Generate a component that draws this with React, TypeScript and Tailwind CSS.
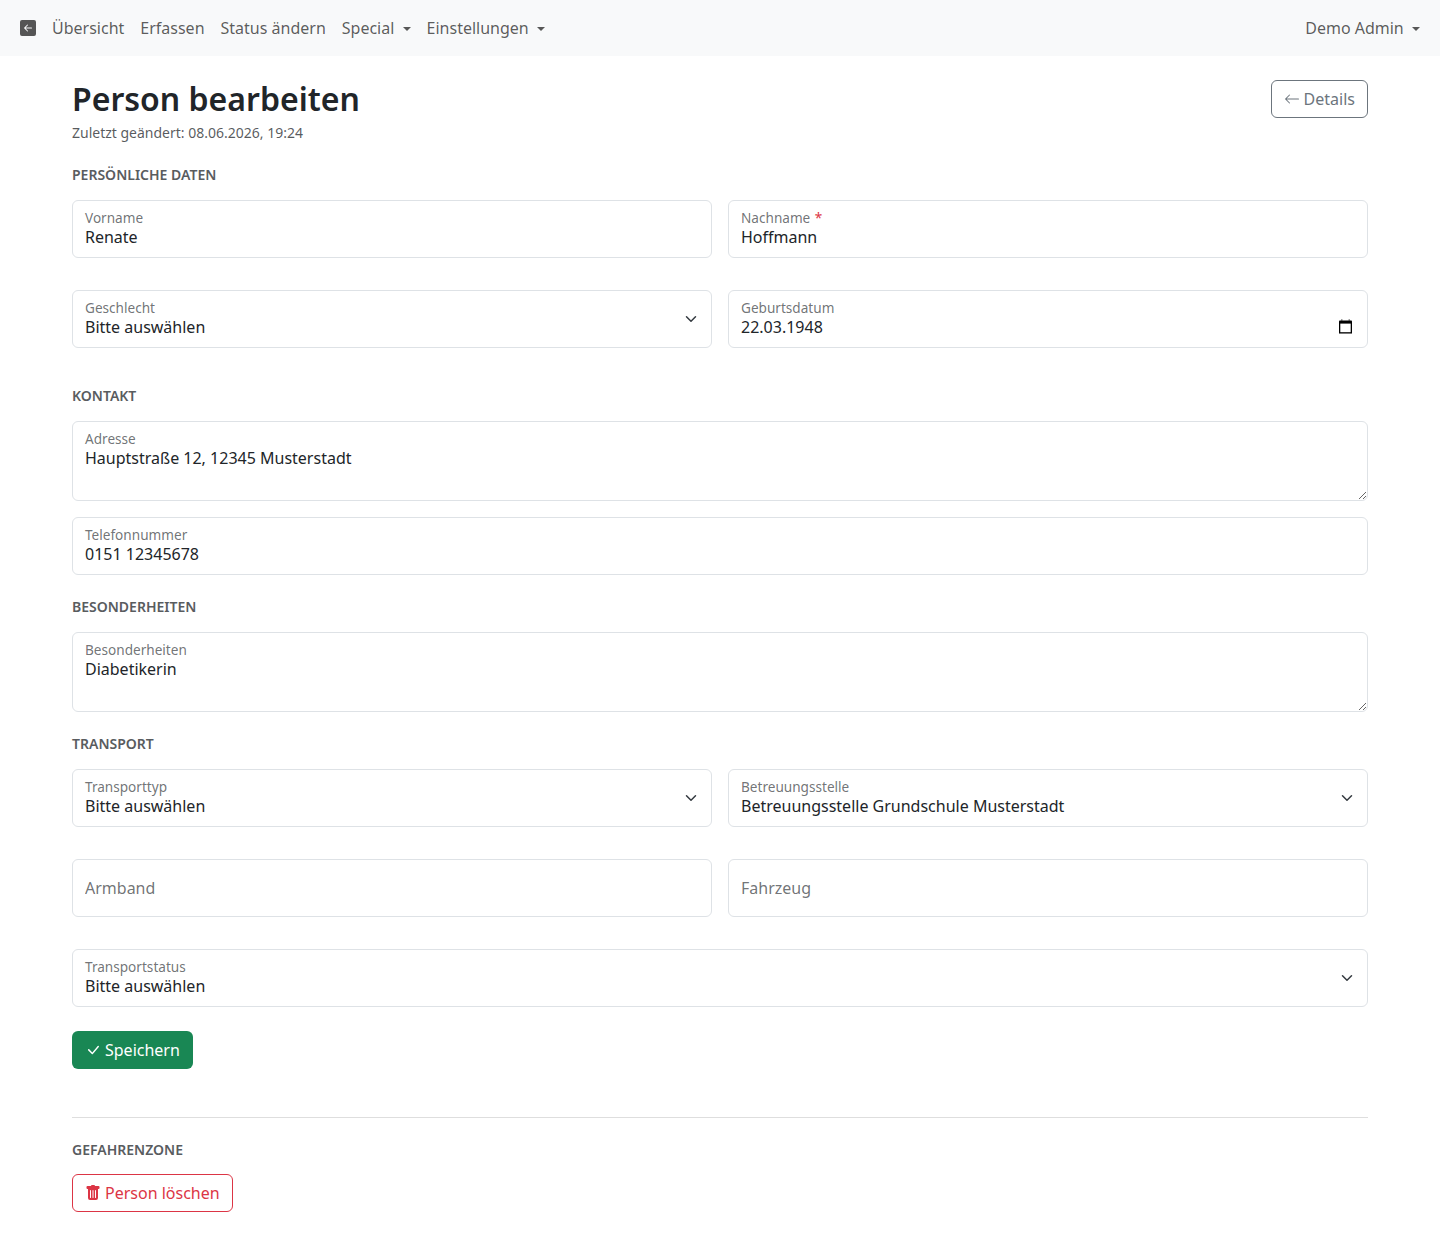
import React from "react";

const font = "font-['Noto_Sans',sans-serif]";

function Caret() {
  return <span className="ml-[8.24px] inline-block align-[3px] w-0 h-0 border-t-[4.8px] border-t-current border-x-[4.8px] border-x-transparent" />;
}

function NavLink({ children, caret }: { children: React.ReactNode; caret?: boolean }) {
  return (
    <a className="block px-2 py-2 text-[rgba(0,0,0,0.65)] cursor-pointer">
      {children}
      {caret && <Caret />}
    </a>
  );
}

function Chevron() {
  return (
    <svg viewBox="0 0 16 16" className="absolute right-[13px] top-[23px] w-4 h-3 pointer-events-none" fill="none" stroke="#343a40" strokeWidth="2" strokeLinecap="round" strokeLinejoin="round">
      <path d="m2 5 6 6 6-6" />
    </svg>
  );
}

function Label({ children }: { children: React.ReactNode }) {
  return <label className="absolute left-[13px] top-[9px] text-[13.6px] leading-[17px] text-[rgba(33,37,41,0.65)] pointer-events-none">{children}</label>;
}

const inputCls = "block w-full h-[58px] border border-[#dee2e6] rounded-md bg-white px-3 pt-[24px] pb-[8px] text-base leading-6 text-[#212529] outline-none";

function TextField({ label, value, required, icon }: { label: string; value: string; required?: boolean; icon?: React.ReactNode }) {
  return (
    <div className="relative">
      <input className={inputCls} value={value} readOnly />
      <Label>
        {label}
        {required && <span className="ml-px text-[#dc3545]"> *</span>}
      </Label>
      {icon}
    </div>
  );
}

function SelectField({ label, value }: { label: string; value: string }) {
  return (
    <div className="relative">
      <select className={`${inputCls} appearance-none pr-10`} value={value} onChange={() => {}}>
        <option>{value}</option>
      </select>
      <Label>{label}</Label>
      <Chevron />
    </div>
  );
}

function AreaField({ label, value }: { label: string; value: string }) {
  return (
    <div className="relative">
      <textarea className="block w-full h-[80px] border border-[#dee2e6] rounded-md bg-white px-3 pt-[24px] pb-[8px] text-base leading-6 text-[#212529] outline-none" value={value} readOnly />
      <Label>{label}</Label>
    </div>
  );
}

function PlainField({ placeholder }: { placeholder: string }) {
  return <input className="block w-full h-[58px] border border-[#dee2e6] rounded-md bg-white px-3 text-base leading-6 text-[#212529] outline-none placeholder:text-[rgba(33,37,41,0.65)]" placeholder={placeholder} />;
}

function Section({ children, className }: { children: React.ReactNode; className: string }) {
  return <h2 className={`text-sm leading-[21px] font-semibold uppercase text-[#595c5f] ${className}`}>{children}</h2>;
}

function Calendar() {
  return (
    <svg viewBox="0 0 13 15" className="absolute left-[610.5px] top-[29px] w-[13px] h-[15px] pointer-events-none">
      <rect x="2.2" y="0" width="1.2" height="2" fill="#888" />
      <rect x="9.6" y="0" width="1.2" height="2" fill="#888" />
      <rect x="0" y="1.6" width="13" height="13" rx="0.8" fill="#000" />
      <rect x="1.3" y="4.6" width="10.4" height="8.6" fill="#fff" />
      <rect x="0" y="14" width="13" height="1" fill="#777" />
    </svg>
  );
}

export default function App() {
  return (
    <div className={`${font} min-h-[1260px] bg-white text-base leading-6 text-[#212529]`}>
      <nav className="h-14 bg-[#f8f9fa] flex items-center justify-between pl-5 pr-3">
        <div className="flex items-center">
          <svg viewBox="0 0 16 16" className="w-4 h-4 mr-2" fill="#555">
            <path d="M16 14a2 2 0 0 1-2 2H2a2 2 0 0 1-2-2V2a2 2 0 0 1 2-2h12a2 2 0 0 1 2 2v12zm-4.5-6.5H5.707l2.147-2.146a.5.5 0 1 0-.708-.708l-3 3a.5.5 0 0 0 0 .708l3 3a.5.5 0 0 0 .708-.708L5.707 8.5H11.5a.5.5 0 0 0 0-1z" />
          </svg>
          <NavLink>Übersicht</NavLink>
          <NavLink>Erfassen</NavLink>
          <NavLink>Status ändern</NavLink>
          <NavLink caret>Special</NavLink>
          <NavLink caret>Einstellungen</NavLink>
        </div>
        <NavLink caret>Demo Admin</NavLink>
      </nav>

      <main className="mx-[72px] pt-6">
        <div className="flex items-start justify-between">
          <div>
            <h1 className="text-[32px] leading-[38.4px] font-semibold text-[#212529]">Person bearbeiten</h1>
            <p className="mt-1 text-sm leading-[21px] text-[rgba(33,37,41,0.75)]">Zuletzt geändert: 08.06.2026, 19:24</p>
          </div>
          <button className="flex items-center h-[38px] px-3 border border-[#6c757d] rounded-md text-[#6c757d]">
            <svg viewBox="0 0 16 16" className="w-4 h-4 mr-1" fill="currentColor">
              <path fillRule="evenodd" d="M15 8a.5.5 0 0 0-.5-.5H2.707l3.147-3.146a.5.5 0 1 0-.708-.708l-4 4a.5.5 0 0 0 0 .708l4 4a.5.5 0 0 0 .708-.708L2.707 8.5H14.5A.5.5 0 0 0 15 8z" />
            </svg>
            Details
          </button>
        </div>

        <Section className="mt-[21px]">Persönliche Daten</Section>
        <div className="mt-[15px] grid grid-cols-2 gap-x-4 gap-y-8">
          <TextField label="Vorname" value="Renate" />
          <TextField label="Nachname" value="Hoffmann" required />
          <SelectField label="Geschlecht" value="Bitte auswählen" />
          <TextField label="Geburtsdatum" value="22.03.1948" icon={<Calendar />} />
        </div>

        <Section className="mt-[37px]">Kontakt</Section>
        <div className="mt-[15px] flex flex-col gap-4">
          <AreaField label="Adresse" value="Hauptstraße 12, 12345 Musterstadt" />
          <TextField label="Telefonnummer" value="0151 12345678" />
        </div>

        <Section className="mt-[21px]">Besonderheiten</Section>
        <div className="mt-[15px]">
          <AreaField label="Besonderheiten" value="Diabetikerin" />
        </div>

        <Section className="mt-[21px]">Transport</Section>
        <div className="mt-[15px] grid grid-cols-2 gap-x-4 gap-y-8">
          <SelectField label="Transporttyp" value="Bitte auswählen" />
          <SelectField label="Betreuungsstelle" value="Betreuungsstelle Grundschule Musterstadt" />
          <PlainField placeholder="Armband" />
          <PlainField placeholder="Fahrzeug" />
          <div className="col-span-2">
            <SelectField label="Transportstatus" value="Bitte auswählen" />
          </div>
        </div>

        <button className="mt-6 flex items-center h-[38px] px-[13px] rounded-md bg-[#198754] text-white">
          <svg viewBox="0 0 16 16" className="w-4 h-4 mr-1" fill="currentColor">
            <path d="M12.736 3.97a.733.733 0 0 1 1.047 0c.286.289.29.756.01 1.05L7.88 12.01a.733.733 0 0 1-1.065.02L3.217 8.384a.757.757 0 0 1 0-1.06.733.733 0 0 1 1.047 0l3.052 3.093 5.4-6.425a.247.247 0 0 1 .02-.022Z" />
          </svg>
          Speichern
        </button>

        <hr className="mt-12 border-t border-[#dedede]" />

        <Section className="mt-[21px]">Gefahrenzone</Section>
        <button className="mt-[14px] flex items-center h-[38px] px-3 border border-[#dc3545] rounded-md text-[#dc3545]">
          <svg viewBox="0 0 16 16" className="w-4 h-4 mr-1" fill="currentColor">
            <path d="M2.5 1a1 1 0 0 0-1 1v1a1 1 0 0 0 1 1H3v9a2 2 0 0 0 2 2h6a2 2 0 0 0 2-2V4h.5a1 1 0 0 0 1-1V2a1 1 0 0 0-1-1H10a1 1 0 0 0-1-1H7a1 1 0 0 0-1 1H2.5zm3 4a.5.5 0 0 1 .5.5v7a.5.5 0 0 1-1 0v-7a.5.5 0 0 1 .5-.5zM8 5a.5.5 0 0 1 .5.5v7a.5.5 0 0 1-1 0v-7A.5.5 0 0 1 8 5zm3 .5v7a.5.5 0 0 1-1 0v-7a.5.5 0 0 1 1 0z" />
          </svg>
          Person löschen
        </button>
      </main>
    </div>
  );
}
